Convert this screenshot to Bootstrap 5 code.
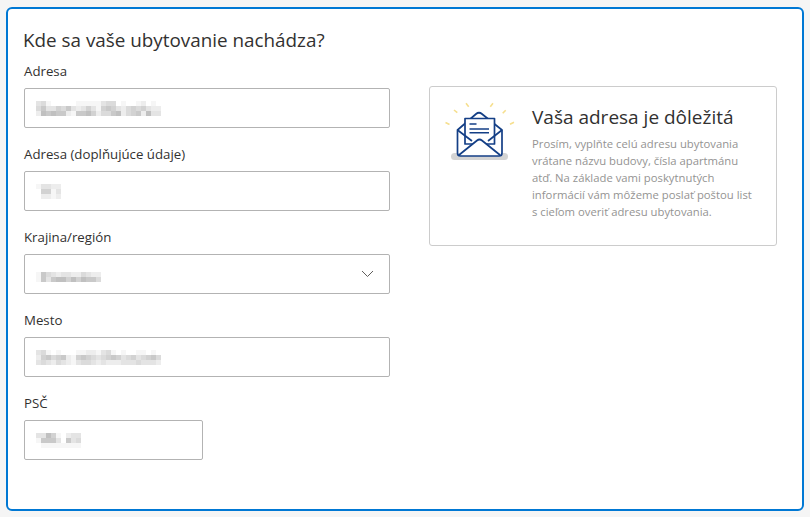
<!DOCTYPE html>
<html lang="sk">
  <head>
    <meta charset="UTF-8" />
    <meta name="viewport" content="width=device-width, initial-scale=1.0" />
    <title>Adresa ubytovania</title>
    <link
      href="https://cdn.jsdelivr.net/npm/bootstrap@5.3.1/dist/css/bootstrap.min.css"
      rel="stylesheet"
    />
    <style>
      body {
        background-color: #f5f5f5;
        font-family: "Open Sans", "Noto Sans", sans-serif;
        color: #323130;
      }
      .page-wrap {
        padding: 7px 6px 7px 6px;
      }
      .place-box {
        height: 504px;
        background-color: #fff;
        border: 2px solid #0078d4;
        border-radius: 6px;
        padding: 17px 24px 0 15px;
      }
      .place-title {
        font-size: 18.85px;
        line-height: 28px;
        font-weight: 400;
        margin: 0 0 7px 0;
      }
      .form-side {
        width: 367px;
        padding-left: 1px;
      }
      .field-group {
        margin-bottom: 16px;
      }
      .field-label {
        display: block;
        font-size: 13.25px;
        line-height: 20px;
        margin-bottom: 7px;
      }
      .field-box {
        height: 40px;
        padding: 0 11px;
        border: 1px solid #b3b3b3;
        border-radius: 2px;
      }
      .field-short {
        width: 179px;
      }
      .info-side {
        width: 348px;
        height: 160px;
        margin-left: 39px;
        margin-top: 25px;
        border: 1px solid #ccc;
        border-radius: 3px;
      }
      .info-pic {
        width: 92px;
        height: 80px;
        margin: 7px 2px 0 8px;
      }
      .info-title {
        font-size: 19px;
        line-height: 26px;
        font-weight: 400;
        margin: 17px 0 5px 0;
        color: #323130;
      }
      .info-text {
        font-size: 11.3px;
        line-height: 17px;
        color: #949392;
        margin: 0;
        width: 226px;
      }
    </style>
  </head>
  <body>
    <div class="page-wrap">
      <div class="place-box">
        <h1 class="place-title">Kde sa vaše ubytovanie nachádza?</h1>
        <div class="d-flex align-items-start">
          <form class="form-side">
            <div class="field-group">
              <label class="field-label">Adresa</label>
              <div class="form-control field-box d-flex align-items-center">
                <span class="mosaic" data-rows="3410000011111344010012010,4633546323531565324545322,2767662166752446724562733"></span>
              </div>
            </div>
            <div class="field-group">
              <label class="field-label">Adresa (doplňujúce údaje)</label>
              <div class="form-control field-box d-flex align-items-center">
                <span class="mosaic" data-rows="13322,05513,02212"></span>
              </div>
            </div>
            <div class="field-group">
              <label class="field-label">Krajina/región</label>
              <div class="form-control field-box d-flex align-items-center justify-content-between">
                <span class="mosaic" data-rows="0000000000000,1643233224322,1636775757664"></span>
                <svg width="13" height="8" viewBox="0 0 13 8" class="me-1">
                  <path d="M1 1l5.500 5.500L12 1" fill="none" stroke="#605e5c" stroke-width="1" />
                </svg>
              </div>
            </div>
            <div class="field-group">
              <label class="field-label">Mesto</label>
              <div class="form-control field-box d-flex align-items-center">
                <span class="mosaic" data-rows="3410100011221341010011010,2564562156543456534534564,3432432134432322233343332"></span>
              </div>
            </div>
            <div class="field-group">
              <label class="field-label">PSČ</label>
              <div class="form-control field-box field-short d-flex align-items-center">
                <span class="mosaic" data-rows="337510233,166630634,011111111"></span>
              </div>
            </div>
          </form>
          <div class="info-side d-flex align-items-start">
            <svg class="info-pic" viewBox="8 14 92 80">
              <rect x="21" y="73" width="57" height="7" rx="3.5" fill="#d4d4d4" />
              <g stroke="#f6df8e" stroke-width="1.6" fill="none">
                <path d="M15.5 42.5l4 2M24 30l3.3 2.7M36 23.3l2.7 3.4M63 23.3l-2.7 3.4M75.7 30.3l-3 3M84 42.3l-4 2" />
              </g>
              <g stroke="#143f86" stroke-width="1.7" stroke-linejoin="round" fill="#fff">
                <path d="M27.5 50L46 34q3-2.500 6 0L72 50V73a3 3 0 0 1-3 3H30.500a3 3 0 0 1-3-3z" />
                <path d="M35 38.500H64.500V64H35z" />
                <path d="M27.500 50L42 61M72 50L58 61" fill="none" />
                <path d="M29 75L47 60.500q2.500-2 5 0L70 75" />
              </g>
              <path d="M39.500 44h7M39.500 49H59M39.500 52.700H59" stroke="#143f86" stroke-width="1.400" fill="none" />
            </svg>
            <div>
              <h2 class="info-title">Vaša adresa je dôležitá</h2>
              <p class="info-text">Prosím, vyplňte celú adresu ubytovania vrátane názvu budovy, čísla apartmánu atď. Na základe vami poskytnutých informácií vám môžeme poslať poštou list s cieľom overiť adresu ubytovania.</p>
            </div>
          </div>
        </div>
      </div>
    </div>
    <script>
      // blurred values: every digit is one 5px cell, bigger = darker
      document.querySelectorAll(".mosaic").forEach((el) => {
        const rows = el.dataset.rows.split(",");
        let html = `<svg width="${rows[0].length * 5}" height="${rows.length * 5}" class="d-block">`;
        rows.forEach((row, y) => {
          row.split("").forEach((d, x) => {
            const g = 255 - d * 9;
            html += `<rect x="${x * 5}" y="${y * 5}" width="5" height="5" fill="rgb(${g},${g},${g})" />`;
          });
        });
        el.innerHTML = html + "</svg>";
      });
    </script>
    <script src="https://cdn.jsdelivr.net/npm/bootstrap@5.3.1/dist/js/bootstrap.bundle.min.js"></script>
  </body>
</html>
